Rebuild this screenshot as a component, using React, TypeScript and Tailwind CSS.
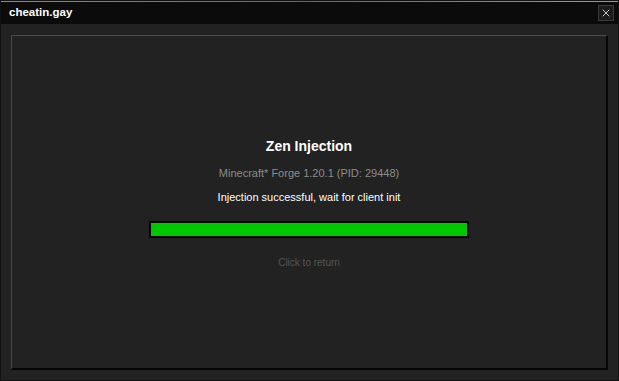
import { X } from "lucide-react";

export default function App() {
  return (
    <div
      className="flex h-[381px] w-[619px] flex-col overflow-hidden border border-[#111] bg-[#222] text-white"
      style={{ fontFamily: "'Liberation Sans', Arial, sans-serif" }}
    >
      <div className="h-px w-full bg-gradient-to-r from-[#b87090] via-[#606878] to-[#d08860]" />
      <div className="flex h-[22px] items-center justify-between bg-[#0b0b0b] pl-2 pr-[4px]">
        <span className="text-[11.5px] font-bold">cheatin.gay</span>
        <button className="flex h-4 w-4 items-center justify-center border border-[#3a3a3a] bg-[#1c1c1c]">
          <X size={12} strokeWidth={1.5} className="text-white" />
        </button>
      </div>

      <div className="flex flex-1 px-[10px] pb-[10px] pt-[11px]">
        <div className="flex flex-1 flex-col items-center border-t border-l border-r-2 border-b-2 border-t-[#4a4a4a] border-l-[#4a4a4a] border-r-[#060606] border-b-[#060606] bg-[#222] pt-[102px]">
          <h1 className="text-[14px] font-bold leading-4">Zen Injection</h1>
          <p className="mt-[11px] text-[11px] leading-4 text-[#8c8c8c]">
            Minecraft* Forge 1.20.1 (PID: 29448)
          </p>
          <p className="mt-2 text-[11px] leading-4 text-white">
            Injection successful, wait for client init
          </p>
          <div className="mt-4 h-[17px] w-[320px] border-2 border-[#050505] bg-[#00c800]" />
          <p className="mt-[17px] text-[10px] leading-4 text-[#555]">Click to return</p>
        </div>
      </div>
    </div>
  );
}
